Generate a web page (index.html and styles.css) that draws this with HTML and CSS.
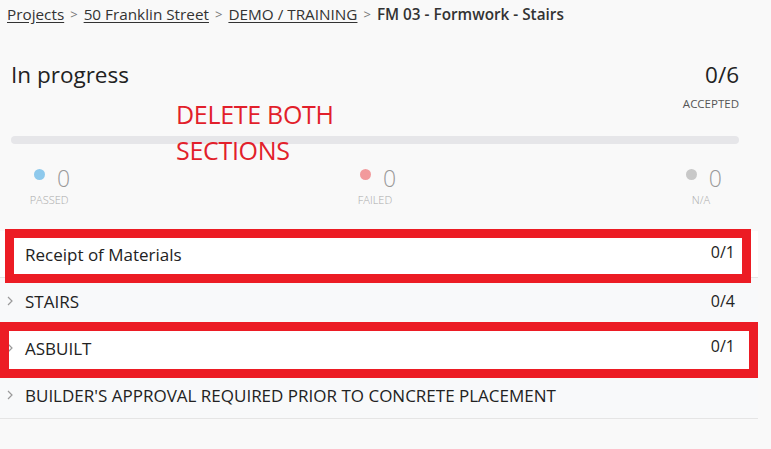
FILE: index.html
```html
<!DOCTYPE html>
<html>
<head>
<meta charset="utf-8">
<link rel="stylesheet" href="styles.css">
</head>
<body>
<nav class="crumbs">
  <a class="crumb">Projects</a><span class="sep">&gt;</span>
  <a class="crumb">50 Franklin Street</a><span class="sep">&gt;</span>
  <a class="crumb">DEMO / TRAINING</a><span class="sep">&gt;</span>
  <strong class="current">FM 03 - Formwork - Stairs</strong>
</nav>

<section class="summary">
  <div class="head">
    <h1 class="status">In progress</h1>
    <div class="accepted">
      <div class="ratio">0/6</div>
      <div class="cap">ACCEPTED</div>
    </div>
  </div>
  <div class="bar"></div>
  <div class="stats">
    <div class="stat">
      <div class="stat-top"><span class="dot dot-pass"></span><span class="num">0</span></div>
      <div class="stat-label">PASSED</div>
    </div>
    <div class="stat">
      <div class="stat-top"><span class="dot dot-fail"></span><span class="num">0</span></div>
      <div class="stat-label">FAILED</div>
    </div>
    <div class="stat">
      <div class="stat-top"><span class="dot dot-na"></span><span class="num">0</span></div>
      <div class="stat-label">N/A</div>
    </div>
  </div>
</section>

<ul class="sections">
  <li class="row hl">
    <svg class="chev" width="6" height="10" viewBox="0 0 6 10"><path d="M1 1l4 4-4 4" fill="none" stroke="#9a9a9a" stroke-width="1.2"/></svg>
    <span class="name">Receipt of Materials</span><span class="count up">0/1</span>
  </li>
  <li class="row">
    <svg class="chev" width="6" height="10" viewBox="0 0 6 10"><path d="M1 1l4 4-4 4" fill="none" stroke="#9a9a9a" stroke-width="1.2"/></svg>
    <span class="name">STAIRS</span><span class="count">0/4</span>
  </li>
  <li class="row hl">
    <svg class="chev" width="6" height="10" viewBox="0 0 6 10"><path d="M1 1l4 4-4 4" fill="none" stroke="#9a9a9a" stroke-width="1.2"/></svg>
    <span class="name">ASBUILT</span><span class="count up">0/1</span>
  </li>
  <li class="row">
    <svg class="chev" width="6" height="10" viewBox="0 0 6 10"><path d="M1 1l4 4-4 4" fill="none" stroke="#9a9a9a" stroke-width="1.2"/></svg>
    <span class="name">BUILDER'S APPROVAL REQUIRED PRIOR TO CONCRETE PLACEMENT</span><span class="count"></span>
  </li>
</ul>

<div class="note">DELETE BOTH<br>SECTIONS</div>
<div class="mark mark-1"></div>
<div class="mark mark-2"></div>
</body>
</html>
```

FILE: styles.css
```css
* { box-sizing: border-box; }
html, body {
  margin: 0;
  padding: 0;
  background: #f9f9f9;
  font-family: "Open Sans", "Noto Sans", sans-serif;
  color: #222;
  position: relative;
  height: 449px;
  overflow: hidden;
}
.crumbs {
  height: 30px;
  padding: 0 7px 3px;
  font-size: 15.3px;
  color: #333;
  display: flex;
  align-items: center;
  white-space: nowrap;
}
.crumb {
  text-decoration: underline;
  text-underline-offset: 2px;
  color: #333;
}
.sep {
  color: #777;
  margin: 0 6px;
  font-size: 13px;
}
.current {
  font-weight: 600;
  color: #333;
}
.summary {
  margin: 0 32px 0 11px;
}
.head {
  display: flex;
  justify-content: space-between;
  align-items: flex-start;
  padding-top: 29px;
}
.status {
  margin: 0;
  font-weight: 400;
  font-size: 22.5px;
  line-height: 32px;
  color: #222;
}
.accepted {
  text-align: right;
}
.ratio {
  font-size: 22.5px;
  line-height: 32px;
  color: #222;
}
.cap {
  font-size: 11.5px;
  color: #555;
  margin-top: 6px;
  line-height: 14px;
}
.bar {
  height: 8px;
  border-radius: 4px;
  background: #e6e6e9;
  margin-top: 25px;
}
.stats {
  display: flex;
  justify-content: space-between;
  padding: 0 17px;
  margin-top: 21px;
}
.stat {
  display: flex;
  flex-direction: column;
  align-items: center;
}
.stat-top {
  display: flex;
  align-items: center;
  gap: 12px;
  height: 26px;
  margin-left: 6px;
}
.dot {
  width: 11px;
  height: 11px;
  border-radius: 50%;
  margin-top: -8px;
}
.dot-pass { background: #8ec9ec; }
.dot-fail { background: #f29a9c; }
.dot-na { background: #c8c8c8; }
.num {
  font-size: 23px;
  font-weight: 300;
  color: #999;
  line-height: 26px;
}
.stat-label {
  font-size: 11px;
  color: #aaa;
  line-height: 14px;
  margin-top: 2px;
  font-weight: 300;
}
.sections {
  list-style: none;
  margin: 24px 13px 0 0;
  padding: 0;
}
.row {
  display: flex;
  align-items: center;
  height: 47px;
  border-bottom: 1px solid #e5e5e5;
  padding: 0 23px 0 7px;
  font-size: 17px;
  background: #f8f9fa;
}
.row.hl { background: #fff; }
.chev {
  flex: none;
  margin-right: 12px;
}
.name {
  flex: 1;
}
.count {
  color: #222;
  font-size: 16px;
}
.count.up {
  margin-top: -5px;
}
.note {
  position: absolute;
  left: 176px;
  top: 96px;
  color: #e21f2b;
  font-size: 25px;
  line-height: 36px;
  letter-spacing: -0.3px;
}
.mark {
  position: absolute;
  border: 9px solid #ec1c24;
}
.mark-1 {
  left: 5px;
  top: 229px;
  width: 746px;
  height: 54px;
}
.mark-2 {
  left: 0;
  top: 322px;
  width: 758px;
  height: 56px;
}
```
